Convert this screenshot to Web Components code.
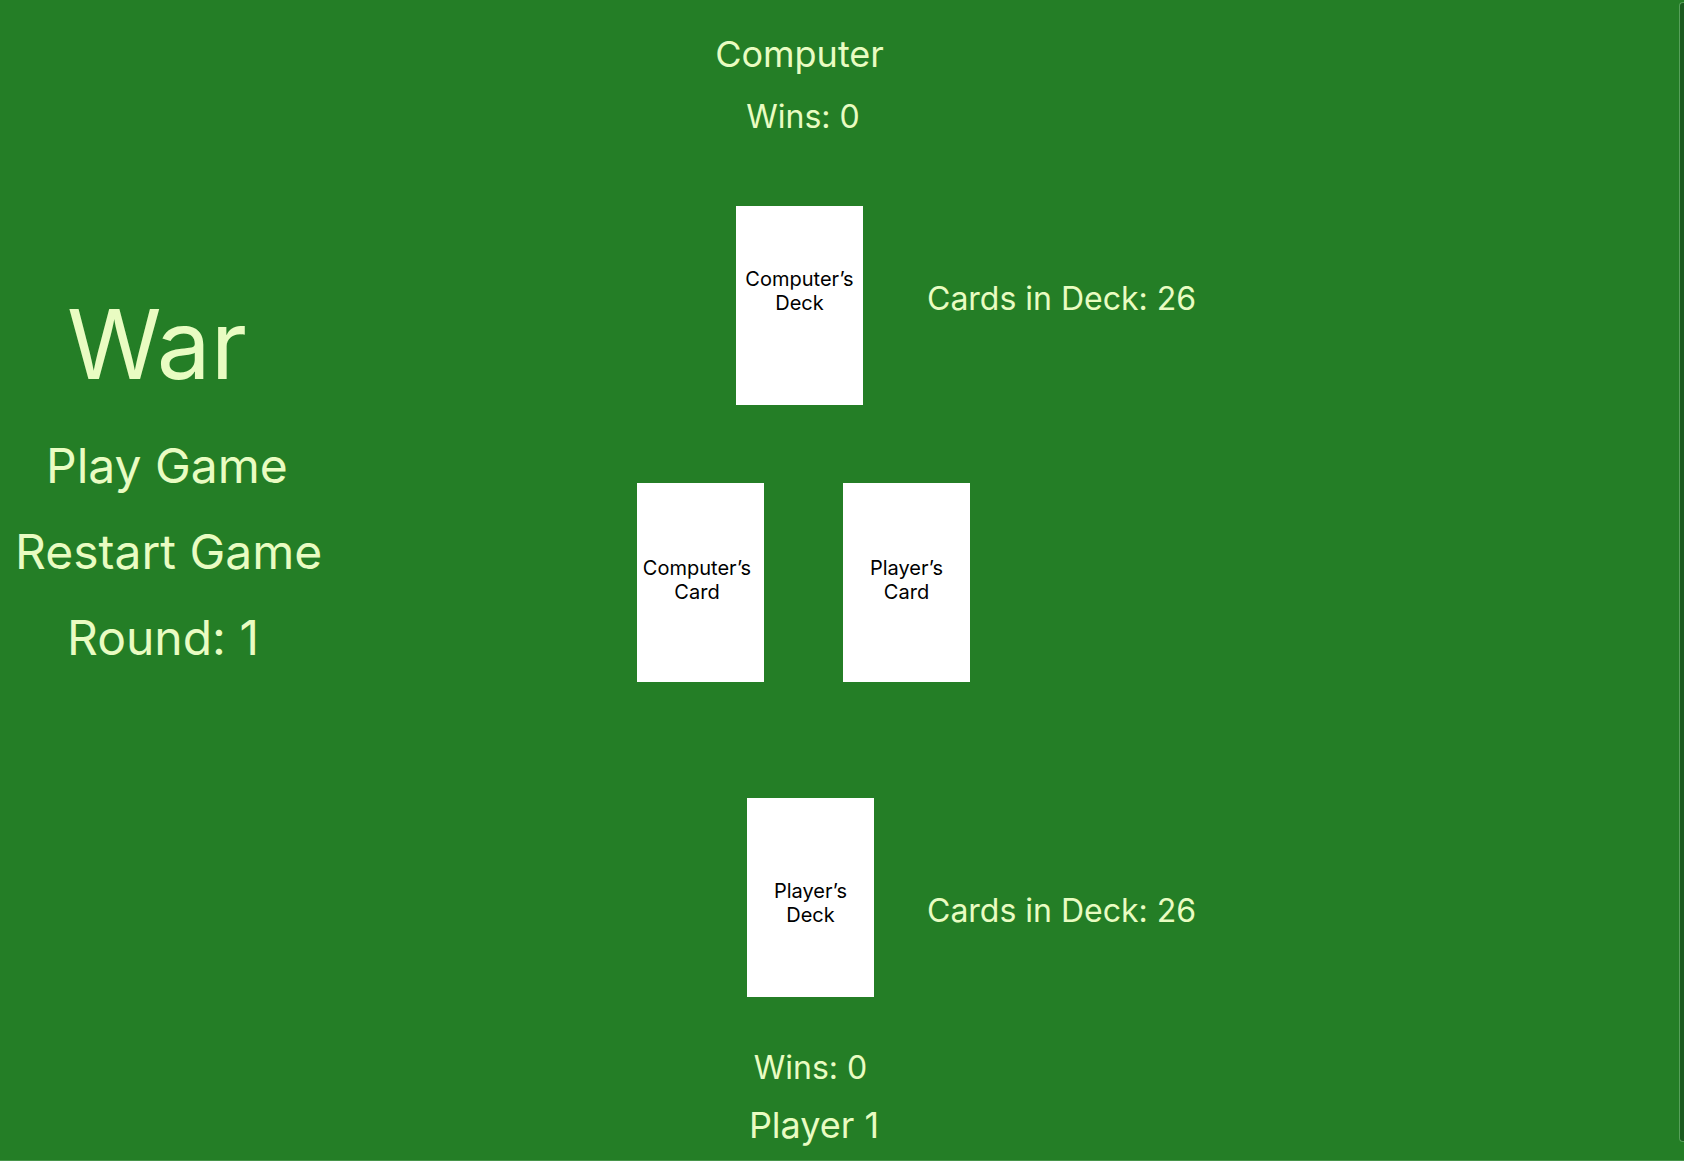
<!DOCTYPE html>
<html lang="en">
<head>
<meta charset="utf-8">
<title>War</title>
<style>
  html, body { margin: 0; }
  body { background: #247e26; color: #e9fcc2; font-family: Inter, "Liberation Sans", sans-serif; }
</style>
</head>
<body>
<war-table>
  <war-menu slot="menu"></war-menu>
  <war-seat class="computer" cards="26">
    <h2 slot="before" class="name">Computer</h2>
    <p slot="before" class="wins nudge">Wins: 0</p>
    <war-card slot="deck" style="--drop: 61px">Computer’s Deck</war-card>
  </war-seat>
  <war-battle>
    <war-card style="--drop: 73px; --end: 7px">Computer’s Card</war-card>
    <war-card style="--drop: 73px">Player’s Card</war-card>
  </war-battle>
  <war-seat class="player" cards="26">
    <war-card slot="deck" style="--drop: 81px">Player’s Deck</war-card>
    <p slot="after" class="wins">Wins: 0</p>
    <h2 slot="after" class="name nudge">Player 1</h2>
  </war-seat>
</war-table>
<script>
class Base extends HTMLElement {
  constructor() {
    super();
    this.attachShadow({ mode: "open" });
  }
  connectedCallback() { this.shadowRoot.innerHTML = this.render(); }
}

customElements.define("war-table", class extends Base {
  render() {
    return `<style>
      :host { display: flex; min-height: 100vh; box-sizing: border-box; border-bottom: 1px solid #46964a; }
      .layout { flex: 1; display: grid; grid-template-columns: 637fr 1042fr; }
      main { display: flex; flex-direction: column; padding-top: 32px; }
      .edge { width: 5px; margin: 2px 0 18px; box-sizing: border-box; background: #1a5a1f;
        border: 1px solid #57a05a; border-right: 0; border-radius: 4px 0 0 4px; }
    </style>
    <div class="layout"><slot name="menu"></slot><main><slot></slot></main></div>
    <div class="edge"></div>`;
  }
});

customElements.define("war-menu", class extends Base {
  render() {
    return `<style>
      :host { display: block; padding-top: 286px; }
      nav { display: flex; flex-direction: column; align-items: flex-start; gap: 28px; }
      h1, p, button { margin: 0; padding: 0; border: 0; background: none; color: inherit;
        font-family: inherit; font-weight: 400; font-size: 48px; line-height: 58px; white-space: nowrap; }
      button { cursor: pointer; }
      h1 { font-size: 96px; line-height: 116px; padding-bottom: 7px; }
      h1, p { margin-left: 67px; }
      .play { margin-left: 46px; }
      .restart { margin-left: 15px; }
    </style>
    <nav>
      <h1>War</h1>
      <button class="play" type="button">Play Game</button>
      <button class="restart" type="button">Restart Game</button>
      <p>Round: 1</p>
    </nav>`;
  }
});

customElements.define("war-seat", class extends Base {
  render() {
    return `<style>
      :host { display: grid; grid-template-columns: var(--seat) auto; column-gap: var(--gap);
        justify-content: start; padding-left: 59px; }
      :host(.computer) { --seat: 207px; --gap: 24px; --label: 73px; }
      :host(.player) { --seat: 229px; --gap: 2px; --label: 93px; }
      .stack { grid-column: 1; display: flex; flex-direction: column; align-items: center; }
      :host(.computer) .before { gap: 21px; padding-bottom: 69px; }
      :host(.player) .after { gap: 15px; padding-top: 51px; }
      .count { grid-column: 2; margin: 0; padding-top: var(--label); font-size: 32px; line-height: 40px; white-space: nowrap; }
      .deck, .count { grid-row: 2; }
      ::slotted(h2), ::slotted(p) { margin: 0; font-weight: 400; white-space: nowrap; }
      ::slotted(h2) { font-size: 36px; line-height: 44px; }
      ::slotted(p) { font-size: 32px; line-height: 40px; }
      ::slotted(.nudge) { padding-left: 7px; }
    </style>
    <div class="stack before"><slot name="before"></slot></div>
    <div class="stack deck"><slot name="deck"></slot></div>
    <p class="count">Cards in Deck: ${this.getAttribute("cards")}</p>
    <div class="stack after"><slot name="after"></slot></div>`;
  }
});

customElements.define("war-battle", class extends Base {
  render() {
    return `<style>
      :host { display: flex; gap: 79px; padding: 78px 0 116px; }
    </style><slot></slot>`;
  }
});

customElements.define("war-card", class extends Base {
  render() {
    return `<style>
      :host { display: block; box-sizing: border-box; width: 127px; height: 199px; background: #fff; color: #000;
        padding: var(--drop) var(--end, 0px) 0 0; font-size: 20px; line-height: 24px; text-align: center; }
      span { display: block; width: min-content; margin: 0 auto; }
    </style><span><slot></slot></span>`;
  }
});
</script>
</body>
</html>
